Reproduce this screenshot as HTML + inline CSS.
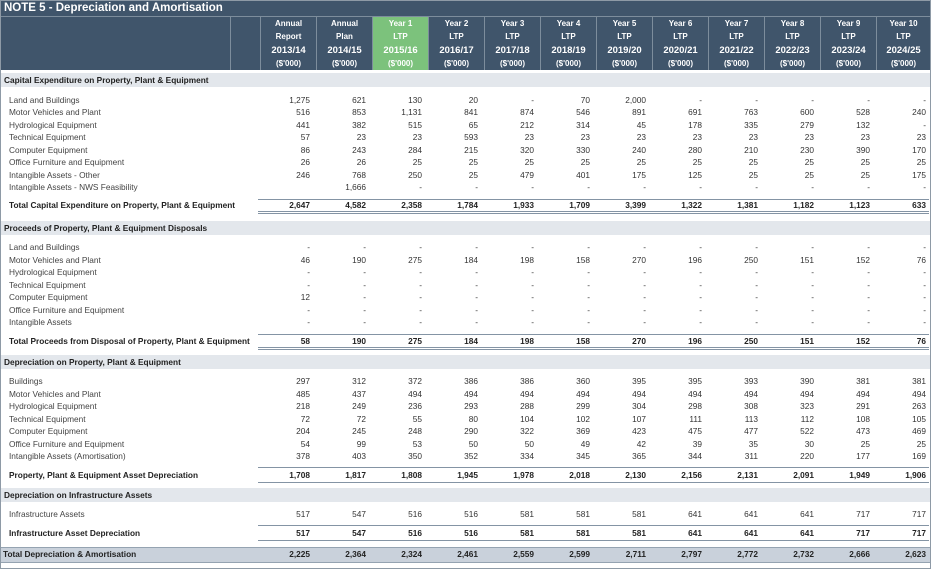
<!DOCTYPE html><html><head><meta charset="utf-8"><style>
body{margin:0;width:931px;height:569px;background:#fff;font-family:"Liberation Sans",sans-serif;overflow:hidden;position:relative}
.frame{position:absolute;left:0;top:0;width:929px;height:567px;border:1px solid #8e9aa6}
.title{position:absolute;left:1px;top:1px;width:929px;height:15px;background:#40556b;color:#fff;font-weight:bold;font-size:11.5px;line-height:15px;padding-left:3px;box-sizing:border-box}
.hdr{position:absolute;left:1px;top:16px;width:929px;height:53px;background:#40556b;border-top:1px solid #7d8d9c}
.hc{position:absolute;top:0;height:53px;border-left:1px solid #7d8d9c;color:#fff;font-weight:bold;font-size:8px;text-align:center;line-height:13.3px;padding-top:0;box-sizing:border-box}
.hc.g{background:#7cc27c}
.hc span{font-size:9.5px}
.r{position:absolute;left:0;width:931px;height:12px;font-size:8.3px;line-height:12px;color:#333}
.r .l{position:absolute;left:9px;top:0;white-space:nowrap;color:#444}
.r .v{position:absolute;top:0;width:50px;text-align:right}
.sec{position:absolute;left:1px;width:929px;height:14px;background:#e3e7ec;font-size:8.3px;font-weight:bold;line-height:14px;color:#222;padding-left:3px;box-sizing:border-box}
.b{font-weight:bold;color:#222}
.b .l{color:#222}
.ln{position:absolute;left:258px;width:671px;height:0;border-top:1px solid #8494a4}
.dl{position:absolute;left:258px;width:671px;height:1px;border-top:1px solid #8494a4;border-bottom:1px solid #8494a4}
.gt{position:absolute;left:1px;top:547px;width:929px;height:14px;background:#c9d1db;border-top:1px solid #95a3b1;border-bottom:1px solid #95a3b1}
</style></head><body>
<div class="frame"></div>
<div class="title">NOTE 5 - Depreciation and Amortisation</div>
<div class="hdr">
<div class="hc" style="left:229px;width:30px"></div>
<div class="hc" style="left:259px;width:56px">Annual<br>Report<br><span>2013/14</span><br>($'000)</div>
<div class="hc" style="left:315px;width:56px">Annual<br>Plan<br><span>2014/15</span><br>($'000)</div>
<div class="hc g" style="left:371px;width:56px">Year 1<br>LTP<br><span>2015/16</span><br>($'000)</div>
<div class="hc" style="left:427px;width:56px">Year 2<br>LTP<br><span>2016/17</span><br>($'000)</div>
<div class="hc" style="left:483px;width:56px">Year 3<br>LTP<br><span>2017/18</span><br>($'000)</div>
<div class="hc" style="left:539px;width:56px">Year 4<br>LTP<br><span>2018/19</span><br>($'000)</div>
<div class="hc" style="left:595px;width:56px">Year 5<br>LTP<br><span>2019/20</span><br>($'000)</div>
<div class="hc" style="left:651px;width:56px">Year 6<br>LTP<br><span>2020/21</span><br>($'000)</div>
<div class="hc" style="left:707px;width:56px">Year 7<br>LTP<br><span>2021/22</span><br>($'000)</div>
<div class="hc" style="left:763px;width:56px">Year 8<br>LTP<br><span>2022/23</span><br>($'000)</div>
<div class="hc" style="left:819px;width:56px">Year 9<br>LTP<br><span>2023/24</span><br>($'000)</div>
<div class="hc" style="left:875px;width:54px">Year 10<br>LTP<br><span>2024/25</span><br>($'000)</div>
</div>

<div class="sec" style="top:73px">Capital Expenditure on Property, Plant &amp; Equipment</div>
<div class="r" style="top:94px"><span class="l">Land and Buildings</span><span class="v" style="left:260px">1,275</span><span class="v" style="left:316px">621</span><span class="v" style="left:372px">130</span><span class="v" style="left:428px">20</span><span class="v" style="left:484px">-</span><span class="v" style="left:540px">70</span><span class="v" style="left:596px">2,000</span><span class="v" style="left:652px">-</span><span class="v" style="left:708px">-</span><span class="v" style="left:764px">-</span><span class="v" style="left:820px">-</span><span class="v" style="left:876px">-</span></div>
<div class="r" style="top:106px"><span class="l">Motor Vehicles and Plant</span><span class="v" style="left:260px">516</span><span class="v" style="left:316px">853</span><span class="v" style="left:372px">1,131</span><span class="v" style="left:428px">841</span><span class="v" style="left:484px">874</span><span class="v" style="left:540px">546</span><span class="v" style="left:596px">891</span><span class="v" style="left:652px">691</span><span class="v" style="left:708px">763</span><span class="v" style="left:764px">600</span><span class="v" style="left:820px">528</span><span class="v" style="left:876px">240</span></div>
<div class="r" style="top:119px"><span class="l">Hydrological Equipment</span><span class="v" style="left:260px">441</span><span class="v" style="left:316px">382</span><span class="v" style="left:372px">515</span><span class="v" style="left:428px">65</span><span class="v" style="left:484px">212</span><span class="v" style="left:540px">314</span><span class="v" style="left:596px">45</span><span class="v" style="left:652px">178</span><span class="v" style="left:708px">335</span><span class="v" style="left:764px">279</span><span class="v" style="left:820px">132</span><span class="v" style="left:876px">-</span></div>
<div class="r" style="top:131px"><span class="l">Technical Equipment</span><span class="v" style="left:260px">57</span><span class="v" style="left:316px">23</span><span class="v" style="left:372px">23</span><span class="v" style="left:428px">593</span><span class="v" style="left:484px">23</span><span class="v" style="left:540px">23</span><span class="v" style="left:596px">23</span><span class="v" style="left:652px">23</span><span class="v" style="left:708px">23</span><span class="v" style="left:764px">23</span><span class="v" style="left:820px">23</span><span class="v" style="left:876px">23</span></div>
<div class="r" style="top:144px"><span class="l">Computer Equipment</span><span class="v" style="left:260px">86</span><span class="v" style="left:316px">243</span><span class="v" style="left:372px">284</span><span class="v" style="left:428px">215</span><span class="v" style="left:484px">320</span><span class="v" style="left:540px">330</span><span class="v" style="left:596px">240</span><span class="v" style="left:652px">280</span><span class="v" style="left:708px">210</span><span class="v" style="left:764px">230</span><span class="v" style="left:820px">390</span><span class="v" style="left:876px">170</span></div>
<div class="r" style="top:156px"><span class="l">Office Furniture and Equipment</span><span class="v" style="left:260px">26</span><span class="v" style="left:316px">26</span><span class="v" style="left:372px">25</span><span class="v" style="left:428px">25</span><span class="v" style="left:484px">25</span><span class="v" style="left:540px">25</span><span class="v" style="left:596px">25</span><span class="v" style="left:652px">25</span><span class="v" style="left:708px">25</span><span class="v" style="left:764px">25</span><span class="v" style="left:820px">25</span><span class="v" style="left:876px">25</span></div>
<div class="r" style="top:169px"><span class="l">Intangible Assets - Other</span><span class="v" style="left:260px">246</span><span class="v" style="left:316px">768</span><span class="v" style="left:372px">250</span><span class="v" style="left:428px">25</span><span class="v" style="left:484px">479</span><span class="v" style="left:540px">401</span><span class="v" style="left:596px">175</span><span class="v" style="left:652px">125</span><span class="v" style="left:708px">25</span><span class="v" style="left:764px">25</span><span class="v" style="left:820px">25</span><span class="v" style="left:876px">175</span></div>
<div class="r" style="top:181px"><span class="l">Intangible Assets - NWS Feasibility</span><span class="v" style="left:316px">1,666</span><span class="v" style="left:372px">-</span><span class="v" style="left:428px">-</span><span class="v" style="left:484px">-</span><span class="v" style="left:540px">-</span><span class="v" style="left:596px">-</span><span class="v" style="left:652px">-</span><span class="v" style="left:708px">-</span><span class="v" style="left:764px">-</span><span class="v" style="left:820px">-</span><span class="v" style="left:876px">-</span></div>
<div class="ln" style="top:199px"></div>
<div class="r b" style="top:199px"><span class="l">Total Capital Expenditure on Property, Plant &amp; Equipment</span><span class="v" style="left:260px">2,647</span><span class="v" style="left:316px">4,582</span><span class="v" style="left:372px">2,358</span><span class="v" style="left:428px">1,784</span><span class="v" style="left:484px">1,933</span><span class="v" style="left:540px">1,709</span><span class="v" style="left:596px">3,399</span><span class="v" style="left:652px">1,322</span><span class="v" style="left:708px">1,381</span><span class="v" style="left:764px">1,182</span><span class="v" style="left:820px">1,123</span><span class="v" style="left:876px">633</span></div>
<div class="dl" style="top:211px"></div>

<div class="sec" style="top:221px">Proceeds of Property, Plant &amp; Equipment Disposals</div>
<div class="r" style="top:241px"><span class="l">Land and Buildings</span><span class="v" style="left:260px">-</span><span class="v" style="left:316px">-</span><span class="v" style="left:372px">-</span><span class="v" style="left:428px">-</span><span class="v" style="left:484px">-</span><span class="v" style="left:540px">-</span><span class="v" style="left:596px">-</span><span class="v" style="left:652px">-</span><span class="v" style="left:708px">-</span><span class="v" style="left:764px">-</span><span class="v" style="left:820px">-</span><span class="v" style="left:876px">-</span></div>
<div class="r" style="top:254px"><span class="l">Motor Vehicles and Plant</span><span class="v" style="left:260px">46</span><span class="v" style="left:316px">190</span><span class="v" style="left:372px">275</span><span class="v" style="left:428px">184</span><span class="v" style="left:484px">198</span><span class="v" style="left:540px">158</span><span class="v" style="left:596px">270</span><span class="v" style="left:652px">196</span><span class="v" style="left:708px">250</span><span class="v" style="left:764px">151</span><span class="v" style="left:820px">152</span><span class="v" style="left:876px">76</span></div>
<div class="r" style="top:266px"><span class="l">Hydrological Equipment</span><span class="v" style="left:260px">-</span><span class="v" style="left:316px">-</span><span class="v" style="left:372px">-</span><span class="v" style="left:428px">-</span><span class="v" style="left:484px">-</span><span class="v" style="left:540px">-</span><span class="v" style="left:596px">-</span><span class="v" style="left:652px">-</span><span class="v" style="left:708px">-</span><span class="v" style="left:764px">-</span><span class="v" style="left:820px">-</span><span class="v" style="left:876px">-</span></div>
<div class="r" style="top:279px"><span class="l">Technical Equipment</span><span class="v" style="left:260px">-</span><span class="v" style="left:316px">-</span><span class="v" style="left:372px">-</span><span class="v" style="left:428px">-</span><span class="v" style="left:484px">-</span><span class="v" style="left:540px">-</span><span class="v" style="left:596px">-</span><span class="v" style="left:652px">-</span><span class="v" style="left:708px">-</span><span class="v" style="left:764px">-</span><span class="v" style="left:820px">-</span><span class="v" style="left:876px">-</span></div>
<div class="r" style="top:291px"><span class="l">Computer Equipment</span><span class="v" style="left:260px">12</span><span class="v" style="left:316px">-</span><span class="v" style="left:372px">-</span><span class="v" style="left:428px">-</span><span class="v" style="left:484px">-</span><span class="v" style="left:540px">-</span><span class="v" style="left:596px">-</span><span class="v" style="left:652px">-</span><span class="v" style="left:708px">-</span><span class="v" style="left:764px">-</span><span class="v" style="left:820px">-</span><span class="v" style="left:876px">-</span></div>
<div class="r" style="top:304px"><span class="l">Office Furniture and Equipment</span><span class="v" style="left:260px">-</span><span class="v" style="left:316px">-</span><span class="v" style="left:372px">-</span><span class="v" style="left:428px">-</span><span class="v" style="left:484px">-</span><span class="v" style="left:540px">-</span><span class="v" style="left:596px">-</span><span class="v" style="left:652px">-</span><span class="v" style="left:708px">-</span><span class="v" style="left:764px">-</span><span class="v" style="left:820px">-</span><span class="v" style="left:876px">-</span></div>
<div class="r" style="top:316px"><span class="l">Intangible Assets</span><span class="v" style="left:260px">-</span><span class="v" style="left:316px">-</span><span class="v" style="left:372px">-</span><span class="v" style="left:428px">-</span><span class="v" style="left:484px">-</span><span class="v" style="left:540px">-</span><span class="v" style="left:596px">-</span><span class="v" style="left:652px">-</span><span class="v" style="left:708px">-</span><span class="v" style="left:764px">-</span><span class="v" style="left:820px">-</span><span class="v" style="left:876px">-</span></div>
<div class="ln" style="top:334px"></div>
<div class="r b" style="top:335px"><span class="l">Total Proceeds from Disposal of Property, Plant &amp; Equipment</span><span class="v" style="left:260px">58</span><span class="v" style="left:316px">190</span><span class="v" style="left:372px">275</span><span class="v" style="left:428px">184</span><span class="v" style="left:484px">198</span><span class="v" style="left:540px">158</span><span class="v" style="left:596px">270</span><span class="v" style="left:652px">196</span><span class="v" style="left:708px">250</span><span class="v" style="left:764px">151</span><span class="v" style="left:820px">152</span><span class="v" style="left:876px">76</span></div>
<div class="dl" style="top:347px"></div>

<div class="sec" style="top:355px">Depreciation on Property, Plant &amp; Equipment</div>
<div class="r" style="top:375px"><span class="l">Buildings</span><span class="v" style="left:260px">297</span><span class="v" style="left:316px">312</span><span class="v" style="left:372px">372</span><span class="v" style="left:428px">386</span><span class="v" style="left:484px">386</span><span class="v" style="left:540px">360</span><span class="v" style="left:596px">395</span><span class="v" style="left:652px">395</span><span class="v" style="left:708px">393</span><span class="v" style="left:764px">390</span><span class="v" style="left:820px">381</span><span class="v" style="left:876px">381</span></div>
<div class="r" style="top:388px"><span class="l">Motor Vehicles and Plant</span><span class="v" style="left:260px">485</span><span class="v" style="left:316px">437</span><span class="v" style="left:372px">494</span><span class="v" style="left:428px">494</span><span class="v" style="left:484px">494</span><span class="v" style="left:540px">494</span><span class="v" style="left:596px">494</span><span class="v" style="left:652px">494</span><span class="v" style="left:708px">494</span><span class="v" style="left:764px">494</span><span class="v" style="left:820px">494</span><span class="v" style="left:876px">494</span></div>
<div class="r" style="top:400px"><span class="l">Hydrological Equipment</span><span class="v" style="left:260px">218</span><span class="v" style="left:316px">249</span><span class="v" style="left:372px">236</span><span class="v" style="left:428px">293</span><span class="v" style="left:484px">288</span><span class="v" style="left:540px">299</span><span class="v" style="left:596px">304</span><span class="v" style="left:652px">298</span><span class="v" style="left:708px">308</span><span class="v" style="left:764px">323</span><span class="v" style="left:820px">291</span><span class="v" style="left:876px">263</span></div>
<div class="r" style="top:413px"><span class="l">Technical Equipment</span><span class="v" style="left:260px">72</span><span class="v" style="left:316px">72</span><span class="v" style="left:372px">55</span><span class="v" style="left:428px">80</span><span class="v" style="left:484px">104</span><span class="v" style="left:540px">102</span><span class="v" style="left:596px">107</span><span class="v" style="left:652px">111</span><span class="v" style="left:708px">113</span><span class="v" style="left:764px">112</span><span class="v" style="left:820px">108</span><span class="v" style="left:876px">105</span></div>
<div class="r" style="top:425px"><span class="l">Computer Equipment</span><span class="v" style="left:260px">204</span><span class="v" style="left:316px">245</span><span class="v" style="left:372px">248</span><span class="v" style="left:428px">290</span><span class="v" style="left:484px">322</span><span class="v" style="left:540px">369</span><span class="v" style="left:596px">423</span><span class="v" style="left:652px">475</span><span class="v" style="left:708px">477</span><span class="v" style="left:764px">522</span><span class="v" style="left:820px">473</span><span class="v" style="left:876px">469</span></div>
<div class="r" style="top:438px"><span class="l">Office Furniture and Equipment</span><span class="v" style="left:260px">54</span><span class="v" style="left:316px">99</span><span class="v" style="left:372px">53</span><span class="v" style="left:428px">50</span><span class="v" style="left:484px">50</span><span class="v" style="left:540px">49</span><span class="v" style="left:596px">42</span><span class="v" style="left:652px">39</span><span class="v" style="left:708px">35</span><span class="v" style="left:764px">30</span><span class="v" style="left:820px">25</span><span class="v" style="left:876px">25</span></div>
<div class="r" style="top:450px"><span class="l">Intangible Assets (Amortisation)</span><span class="v" style="left:260px">378</span><span class="v" style="left:316px">403</span><span class="v" style="left:372px">350</span><span class="v" style="left:428px">352</span><span class="v" style="left:484px">334</span><span class="v" style="left:540px">345</span><span class="v" style="left:596px">365</span><span class="v" style="left:652px">344</span><span class="v" style="left:708px">311</span><span class="v" style="left:764px">220</span><span class="v" style="left:820px">177</span><span class="v" style="left:876px">169</span></div>
<div class="ln" style="top:467px"></div>
<div class="r b" style="top:469px"><span class="l">Property, Plant &amp; Equipment Asset Depreciation</span><span class="v" style="left:260px">1,708</span><span class="v" style="left:316px">1,817</span><span class="v" style="left:372px">1,808</span><span class="v" style="left:428px">1,945</span><span class="v" style="left:484px">1,978</span><span class="v" style="left:540px">2,018</span><span class="v" style="left:596px">2,130</span><span class="v" style="left:652px">2,156</span><span class="v" style="left:708px">2,131</span><span class="v" style="left:764px">2,091</span><span class="v" style="left:820px">1,949</span><span class="v" style="left:876px">1,906</span></div>
<div class="ln" style="top:482px"></div>

<div class="sec" style="top:488px">Depreciation on Infrastructure Assets</div>
<div class="r" style="top:508px"><span class="l">Infrastructure Assets</span><span class="v" style="left:260px">517</span><span class="v" style="left:316px">547</span><span class="v" style="left:372px">516</span><span class="v" style="left:428px">516</span><span class="v" style="left:484px">581</span><span class="v" style="left:540px">581</span><span class="v" style="left:596px">581</span><span class="v" style="left:652px">641</span><span class="v" style="left:708px">641</span><span class="v" style="left:764px">641</span><span class="v" style="left:820px">717</span><span class="v" style="left:876px">717</span></div>
<div class="ln" style="top:525px"></div>
<div class="r b" style="top:527px"><span class="l">Infrastructure Asset Depreciation</span><span class="v" style="left:260px">517</span><span class="v" style="left:316px">547</span><span class="v" style="left:372px">516</span><span class="v" style="left:428px">516</span><span class="v" style="left:484px">581</span><span class="v" style="left:540px">581</span><span class="v" style="left:596px">581</span><span class="v" style="left:652px">641</span><span class="v" style="left:708px">641</span><span class="v" style="left:764px">641</span><span class="v" style="left:820px">717</span><span class="v" style="left:876px">717</span></div>
<div class="ln" style="top:540px"></div>

<div class="gt"></div>
<div class="r b" style="top:548px"><span class="l" style="left:3px">Total Depreciation &amp; Amortisation</span><span class="v" style="left:260px">2,225</span><span class="v" style="left:316px">2,364</span><span class="v" style="left:372px">2,324</span><span class="v" style="left:428px">2,461</span><span class="v" style="left:484px">2,559</span><span class="v" style="left:540px">2,599</span><span class="v" style="left:596px">2,711</span><span class="v" style="left:652px">2,797</span><span class="v" style="left:708px">2,772</span><span class="v" style="left:764px">2,732</span><span class="v" style="left:820px">2,666</span><span class="v" style="left:876px">2,623</span></div>
</body></html>
